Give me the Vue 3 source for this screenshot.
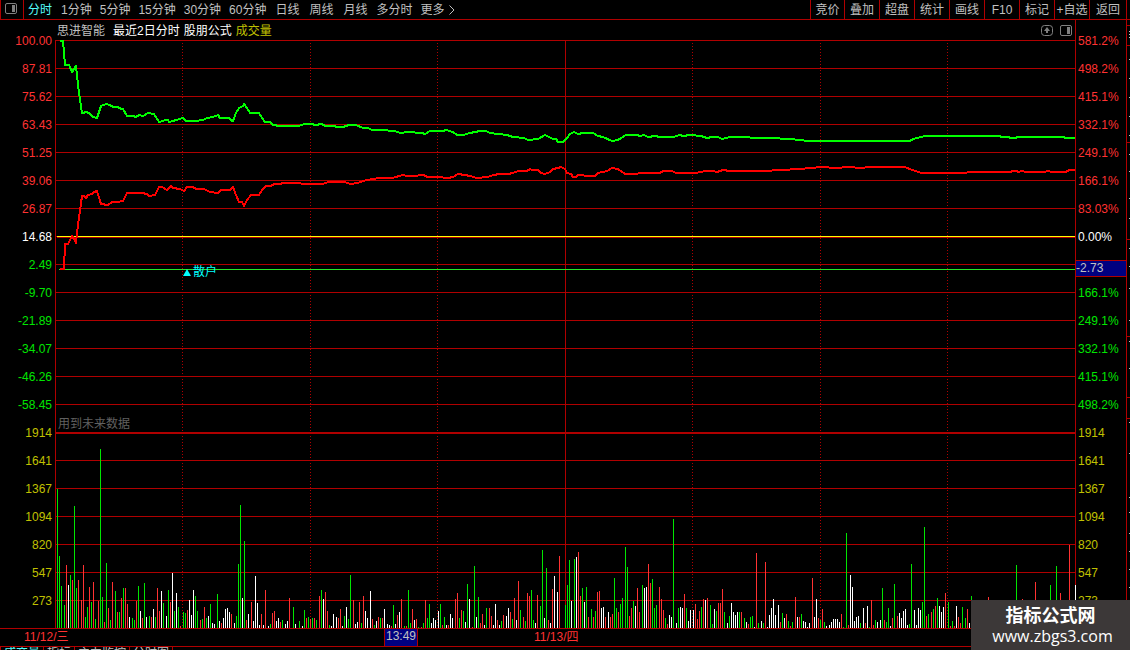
<template>
  <main class="app">
    <!-- ===== Barra superior ===== -->
    <nav class="topbar">
      <button class="panel-btn" aria-label="侧栏">
        <svg width="12" height="11" viewBox="0 0 12 11">
          <rect x="0.5" y="0.5" width="11" height="10" rx="1.5" fill="none" stroke="#808080" />
          <rect x="7" y="2" width="3" height="7" fill="#808080" />
        </svg>
      </button>
      <div class="periods">
        <button
          v-for="p in periods"
          :key="p"
          :class="['period', { active: p === period, line: p.endsWith('线') }]"
          @click="period = p"
        >{{ p }}</button>
        <button class="period more">更多
          <svg width="6" height="10" viewBox="0 0 6 10"><path d="M0.5 0.5L5 5L0.5 9.5" fill="none" stroke="#c0c0c0" /></svg>
        </button>
      </div>
      <div class="tools">
        <button v-for="t in tools" :key="t" class="tool">{{ t }}</button>
      </div>
    </nav>

    <div class="body">
      <!-- ===== Eje izquierdo ===== -->
      <div class="axis left">
        <span v-for="(l, i) in leftLabels" :key="i" :class="toneOf(i)">{{ l }}</span>
      </div>

      <!-- ===== Gráfico ===== -->
      <section class="plot">
        <header class="legend">
          <span class="gray">思进智能</span>
          <span class="white names">最近2日分时</span>
          <span class="white">股朋公式</span>
          <span class="yellow volume">成交量</span>
          <span class="legend-btns">
            <button aria-label="上移">
              <svg width="12" height="11" viewBox="0 0 12 11">
                <rect x="0.5" y="0.5" width="11" height="10" rx="3" fill="none" stroke="#808080" />
                <path d="M6 2L9 6H7V8H5V6H3Z" fill="#808080" />
              </svg>
            </button>
            <button aria-label="分栏">
              <svg width="12" height="11" viewBox="0 0 12 11">
                <rect x="0.5" y="0.5" width="11" height="10" rx="1.5" fill="none" stroke="#808080" />
                <rect x="7" y="2" width="3" height="7" fill="#808080" />
              </svg>
            </button>
          </span>
        </header>

        <div class="canvas">
          <svg class="chart" viewBox="55 40 1021 588" preserveAspectRatio="none" shape-rendering="crispEdges">
            <g fill="#b00000">
              <rect v-for="y in rows" :key="y" x="55" :y="y" width="1021" :height="y === 432 ? 2 : 1" />
              <rect x="55" y="40" width="1" height="588" />
              <rect x="565" y="40" width="1" height="588" />
              <rect x="1075" y="40" width="1" height="588" />
              <rect x="57" y="237" width="1018" height="1" />
            </g>
            <path :d="dotted" stroke="#b00000" stroke-dasharray="1 2" />
            <path :d="bars.r" fill="#ff3232" />
            <path :d="bars.g" fill="#00e600" />
            <path :d="bars.w" fill="#ffffff" />
            <rect x="57" y="236" width="1018" height="1" fill="#ffff00" />
            <rect x="59" y="269" width="1016" height="1" fill="#28e628" />
            <polyline :points="redLine" class="curve" stroke="#ff0000" />
            <polyline :points="greenLine" class="curve" stroke="#00ff00" />
          </svg>
          <span class="marker"><svg width="8" height="7" viewBox="0 0 8 7"><path d="M4 0L8 7H0Z" fill="#00ffff" /></svg>散户</span>
          <span class="note">用到未来数据</span>
        </div>
      </section>

      <!-- ===== Eje derecho ===== -->
      <div class="axis right">
        <span v-for="(l, i) in rightLabels" :key="i" :class="toneOf(i)">{{ l }}</span>
        <span class="price-tag">-2.73</span>
      </div>

      <div class="edge">
        <svg width="3" height="626" viewBox="0 0 3 626" shape-rendering="crispEdges">
          <path :d="edgeRules" fill="#b00000" />
          <path :d="edgeTicks" fill="#c0c0c0" />
        </svg>
      </div>
    </div>

    <!-- ===== Fechas ===== -->
    <div class="dates">
      <span class="date">11/12/三</span>
      <span class="time">13:49</span>
      <span></span>
      <span>11/13/四</span>
    </div>

    <div class="tabs">
      <button v-for="t in tabs" :key="t" :class="{ active: t === tab }" @click="tab = t">{{ t }}</button>
    </div>

    <aside class="watermark">
      <strong>指标公式网</strong>
      <span>www.zbgs3.com</span>
    </aside>
  </main>
</template>

<script setup>
import { ref } from 'vue'

const periods = ['分时', '1分钟', '5分钟', '15分钟', '30分钟', '60分钟', '日线', '周线', '月线', '多分时']
const tools = ['竞价', '叠加', '超盘', '统计', '画线', 'F10', '标记', '+自选', '返回']
const tabs = ['成交量', '指标', '主力监控', '分时图']
const period = ref('分时')
const tab = ref('成交量')

const volumes = ['1914', '1641', '1367', '1094', '820', '547', '273']
const leftLabels = [
  '100.00', '87.81', '75.62', '63.43', '51.25', '39.06', '26.87', '14.68',
  '2.49', '-9.70', '-21.89', '-34.07', '-46.26', '-58.45', ...volumes,
]
const rightLabels = [
  '581.2%', '498.2%', '415.1%', '332.1%', '249.1%', '166.1%', '83.03%', '0.00%',
  '', '166.1%', '249.1%', '332.1%', '415.1%', '498.2%', ...volumes,
]
function toneOf(i) {
  return i < 7 ? 'red' : i === 7 ? 'white' : i < 14 ? 'green' : 'yellow'
}

/** ===== Rejilla ===== */
const rows = Array.from({ length: 21 }, (_, i) => 40 + i * 28)
const dotted = [182, 310, 437, 692, 820, 947].map(x => `M${x + 0.5} 43V628`).join('')

/** ===== Volumen: color, x, tope ===== */
const volumeData = `
g57,489 g59,556 g61,586 g64,605 r66,565 w68,585 g70,575 r72,580 g74,506 g76,588 r78,580 r81,600 r83,565
g85,617 g87,607 r89,587 g91,602 r93,582 g95,619 r98,601 g100,449 g102,597 r104,622 g106,563 r108,608
g110,620 r112,582 g115,591 r117,612 g119,612 r121,598 g123,588 r125,588 r127,604 w129,617 g132,618
g134,620 r136,601 g138,586 w140,611 r142,618 g144,583 w146,617 g149,616 r151,617 w153,609 g155,617
r157,588 r159,611 w161,591 g163,603 w166,616 g168,590 r170,602 w172,573 g174,611 w176,593 g178,607
r180,626 g183,612 g185,613 r187,610 w189,600 w191,615 w193,590 g195,596 g197,611 r200,620 g202,619
r204,607 g206,618 w208,616 g210,604 w212,623 w214,624 g217,594 w219,621 r221,623 w223,618 w225,609
w227,608 w229,612 r231,614 w234,623 g236,616 g238,564 g240,505 w242,598 g244,541 r246,620 w248,614
r251,602 w253,621 w255,576 w257,603 w259,625 r261,614 w263,625 r265,590 w268,626 g270,624 r272,613
r274,611 w276,621 w278,618 r280,622 g282,620 w285,624 w287,621 r289,598 g293,607 w295,624 g299,621
w302,626 g304,610 r306,618 g308,617 r310,619 g312,618 r314,618 g316,620 r319,596 g321,590 w323,599
r325,592 r327,611 g329,625 w331,626 w333,614 w336,617 r338,618 r340,609 w342,626 g344,616 w346,607
g348,619 g350,575 r353,600 w355,624 w357,622 r359,602 g361,623 r363,596 w365,611 w367,618 w370,591
r372,619 g374,625 w376,621 r378,617 g380,618 r382,618 w384,609 w387,624 w389,625 r391,626 g393,605
w395,624 r397,615 w399,612 r401,599 g404,626 r406,626 g408,590 g410,623 r412,609 w414,620 r416,619
g418,627 r421,627 g423,623 r425,600 g427,618 g429,604 w431,623 w433,618 w435,620 w438,611 g440,604
r442,625 g444,617 w446,625 r448,625 w450,614 w452,618 r455,599 r457,593 g459,618 r461,610 g463,611
w465,622 g467,584 w469,599 r472,627 g474,566 w476,617 g478,597 r480,623 r482,614 w484,625 g486,608
r489,608 r491,616 w493,625 w495,604 r497,620 w499,625 g501,621 r503,615 w506,616 w508,608 r510,612
g512,619 r514,598 w516,620 r518,581 g520,610 r523,617 g525,621 r527,593 r529,596 g531,590 g533,620
w535,623 r537,595 g540,606 g542,550 w544,618 g546,568 r548,620 w550,623 r552,589 w554,576 w557,592
r559,556 g565,605 g567,585 g569,560 w571,601 g574,559 w576,557 r578,552 r580,596 g582,588 w584,602
g586,587 r588,617 g591,609 r593,617 g595,611 r597,592 r599,591 w601,608 w603,607 r605,617 w608,612
r610,617 r612,614 g614,578 g616,608 r618,612 g620,604 g622,598 g625,547 g627,567 r629,616 r631,608
g633,601 w635,606 r637,588 r639,612 g642,585 w644,588 w646,587 r648,564 r650,583 g652,579 g654,608
g656,605 r659,587 r661,599 r663,610 g665,618 r667,624 w669,615 w671,617 g673,519 w676,623 g678,608
w680,607 w682,608 r684,594 g686,608 w688,621 w690,610 w693,610 r695,604 r697,619 r699,611 g701,607
r703,599 w705,600 r707,598 g710,605 g712,624 w714,609 g716,611 r718,603 r720,603 r722,589 g724,612
w727,623 g729,616 w731,603 w733,612 w735,615 w737,612 g739,612 r741,612 g744,618 w746,622 r748,624
g750,617 g752,616 w754,627 r756,553 g758,623 w761,621 g763,623 r765,562 w767,627 w769,615 w771,608
w773,599 w775,615 w778,605 r780,622 g782,613 w784,618 r786,614 g788,621 r790,626 g792,622 r795,597
w797,617 r799,617 g801,614 w803,621 w805,622 w807,627 w809,623 r812,578 w814,617 w816,599 r818,618
g820,620 r822,609 g824,622 w826,626 w829,625 w831,622 w833,619 w835,619 w837,619 w839,622 r841,614
g843,627 g846,533 r848,625 w850,575 w852,587 w854,621 w856,617 w858,616 g860,623 w863,608 r865,623
w867,606 g869,627 r871,600 r873,625 g875,620 w877,622 w880,620 g882,588 r884,620 g886,622 g888,608
w890,626 r892,618 g894,584 r897,616 w899,613 w901,618 w903,611 w905,609 w907,625 g909,624 g911,564
w914,610 w916,625 w918,608 w920,610 g922,602 g924,527 r926,616 g928,614 r931,612 g933,609 r935,606
g937,598 w939,606 w941,612 w943,607 r945,593 g948,602 r950,626 g952,621 r954,626 w956,606 r958,617
r960,623 g962,607 g965,618 r967,609 w969,623 g971,596 r988,597 g1016,565 r1022,599 r1035,582
g1050,585 g1056,566 r1060,593 r1069,545 w1075,585`

const bars = { r: '', g: '', w: '' }
volumeData.trim().split(/\s+/).forEach(item => {
  const [x, top] = item.slice(1).split(',')
  bars[item[0]] += `M${x} ${top}h1V628h-1z`
})

/** ===== Curvas ===== */
const greenLine = `60,41 63,41 65,65 69,65 72,72 76,66 78,85 82,113 87,112 90,114 93,117 97,118 101,106 106,104
110,105 113,107 118,107 121,109 123,109 127,116 133,116 136,117 139,115 143,116 148,113 154,114 159,122 163,121
165,120 168,120 169,122 173,121 183,118 186,121 195,121 203,120 207,118 213,117 218,115 220,118 229,118 232,121
233,121 236,113 239,108 243,106 244,104 247,108 250,113 259,113 262,118 265,122 270,122 273,125 280,126 298,126
305,124 312,124 315,125 322,124 325,126 334,126 337,127 343,127 349,125 356,125 363,128 368,128 372,130 380,130
395,131 400,133 408,132 422,133 425,134 430,131 443,131 446,130 453,132 457,135 463,135 470,133 480,131 486,131
490,133 507,135 513,137 524,138 528,140 538,139 545,135 553,139 556,139 558,142 563,142 567,138 570,134 574,132
578,134 583,133 593,133 598,136 603,137 612,141 618,140 626,135 637,135 640,136 644,135 648,137 655,136 660,137
673,137 680,135 683,136 690,135 701,136 707,138 712,137 718,137 722,139 730,137 770,138 790,139 808,141 910,141
913,139 925,136 998,136 1003,137 1009,137 1010,138 1016,138 1017,137 1064,137 1065,138 1075,138`

const redLine = `60,269 64,269 65,244 68,244 72,236 74,239 76,243 78,225 82,196 84,196 86,198 88,195 92,194 94,192
97,191 101,204 108,205 112,202 117,202 123,201 127,193 142,193 147,194 149,196 155,195 159,187 162,187 167,190
171,186 173,188 180,189 184,191 187,187 193,187 196,189 204,189 210,192 218,193 221,190 230,190 233,187 236,195
239,202 242,202 244,206 247,200 251,195 259,195 262,190 266,186 271,186 274,184 280,184 283,183 300,183 302,184
323,184 328,182 345,182 350,184 358,183 363,181 372,179 380,178 392,178 403,175 407,176 417,176 419,175 424,175
427,177 437,177 448,178 453,177 458,174 465,175 470,176 477,178 488,177 493,175 500,174 509,174 519,171 527,171
530,169 532,170 538,170 541,173 545,174 550,172 553,169 558,168 561,167 565,169 567,173 571,174 573,177 576,177
578,175 583,175 585,176 595,176 598,173 607,171 612,168 618,169 625,174 637,174 639,173 660,173 663,171 672,171
676,173 696,173 705,171 713,171 717,172 723,170 730,171 765,171 780,170 800,169 822,167 835,168 850,167 860,168
870,167 905,167 912,170 922,173 950,173 985,172 1011,172 1012,171 1017,171 1018,172 1022,171 1026,172 1045,172
1047,171 1053,172 1066,172 1069,170 1075,170`

/** ===== Borde derecho ===== */
const edgeRules = [5, 25, 122, 219, 316, 377, 398].map(y => `M0 ${y}h3v1h-3z`).join('')
const edgeTicks = [11, 14, 17, 39, 58, 77, 96, 115, 134, 151, 178, 198, 228, 246, 268, 300, 321, 348, 402, 433, 477, 492, 513, 531, 549, 567]
  .map(y => `M2 ${y}h1v1h-1z`).join('')
</script>

<style>
body{margin:0;background:#000}
</style>

<style scoped>
.app{position:relative;height:100vh;display:flex;flex-direction:column;overflow:hidden;background:#000;color:#c0c0c0;font-family:'Liberation Sans','Noto Sans CJK SC',sans-serif;font-size:12px;line-height:16px;white-space:nowrap}
button{border:0;margin:0;padding:0;background:none;color:inherit;font:inherit;cursor:pointer}
svg{display:block}

.topbar{flex:none;display:flex;height:19px;border-bottom:1px solid #b00000;border-left:1px solid #b00000}
.panel-btn{width:23px;padding:0 0 2px 4px;border-right:1px solid #b00000}
.periods{flex:1;display:flex;gap:8px;padding-left:4px;align-items:center}
.period.line{padding:0 1px}
.period.active{margin-right:1px;color:#54fcfc}
.more{display:flex;align-items:center;gap:4px}
.tools{display:flex;margin-right:3px;border-right:1px solid #b00000}
.tool{width:35px;border-left:1px solid #b00000}
.tool:first-child{width:34px}
.tool:last-child{width:37px}

.body{flex:none;display:flex}
.axis{position:relative;display:grid;grid-auto-rows:28px;align-items:center;align-content:start;padding-top:7px;box-sizing:border-box}
.left{width:55px;padding-right:3px;text-align:right}
.right{width:50px;padding-left:2px}
.red{color:#ff3232}
.green{color:#00e600}
.white{color:#fff}
.yellow{color:#c0c000}
.gray{color:#c0c0c0}
.price-tag{position:absolute;top:240px;left:0;right:0;height:15px;line-height:15px;background:#000080;border-top:1px solid #b00000;border-bottom:1px solid #b00000}

.plot{flex:1;min-width:0}
.legend{box-sizing:border-box;display:flex;height:20px;align-items:center;padding:1px 0 0 2px;border-right:1px solid #b00000}
.names{margin:0 4px 0 8px}
.volume{margin-left:4px}
.legend-btns{display:flex;gap:7px;margin-left:auto;padding-right:3px}
.canvas{position:relative}
.chart{width:100%;height:588px}
.curve{fill:none;stroke-width:2;stroke-linejoin:round}
.marker{position:absolute;left:128px;top:224px;display:flex;gap:2px;align-items:center;color:#00ffff}
.note{position:absolute;left:3px;top:376px;color:#606060}
.edge{width:3px;border-left:1px solid #b00000;height:608px;overflow:hidden}

.dates{flex:none;display:grid;grid-template-columns:384fr 34px 116fr 596fr;height:17px;border-top:1px solid #b00000;border-bottom:1px solid #b00000;color:#ff3232}
.date{padding-left:24px}
.time{box-sizing:border-box;background:#000080;border:solid #b00000;border-width:0 1px;color:#c0c0c0;text-align:center;line-height:14px}
.tabs{display:flex;align-items:flex-start;height:3px;overflow:hidden;border-left:1px solid #b00000}
.tabs button{padding:0 3px;line-height:12px;border-right:1px solid #b00000}
.tabs .active{color:#54fcfc}

.watermark{position:absolute;right:0;bottom:0;width:159px;height:50px;display:flex;flex-direction:column;align-items:center;background:#3c3838;color:#fff}
.watermark strong{font-size:18px;line-height:20px;margin-top:6px}
.watermark span{padding-left:4px;font-family:'Open Sans','Noto Sans',sans-serif;font-size:16px;line-height:20px}
</style>
